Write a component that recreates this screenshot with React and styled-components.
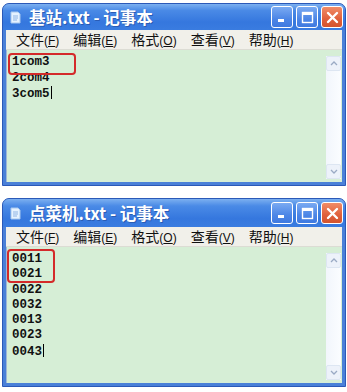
import styled, { createGlobalStyle } from 'styled-components';

const GlobalStyle = createGlobalStyle`
  html, body {
    margin: 0;
    padding: 0;
    background: #ffffff;
  }
  body {
    font-family: "Noto Sans CJK SC", "Noto Sans", sans-serif;
  }
`;

const Page = styled.div`
  width: 347px;
  height: 392px;
  padding: 3px 1px 0 2px;
  box-sizing: border-box;
  display: flex;
  flex-direction: column;
  gap: 12px;
`;

const Frame = styled.div`
  width: 344px;
  height: ${(p) => p.$height}px;
  box-sizing: border-box;
  display: flex;
  flex-direction: column;
  border: 1px solid #2b59b8;
  border-radius: 7px 7px 0 0;
  background: #4a80d8;
  overflow: hidden;
`;

const TitleBar = styled.div`
  height: ${(p) => p.$h}px;
  flex-shrink: 0;
  display: flex;
  align-items: center;
  padding: 0 2px 0 7px;
  background: linear-gradient(180deg, #7cb0f0 0%, #4a8ae6 25%, #3577de 70%, #3a7ce0 100%);
`;

const TitleText = styled.span`
  flex: 1;
  margin-left: 8px;
  color: #ffffff;
  font-size: 16.5px;
  font-weight: 700;
  line-height: 1;
  text-shadow: 1px 1px 0 #2a5cb4;
`;

const Controls = styled.div`
  display: flex;
  gap: 3px;
`;

const CtrlButton = styled.div`
  width: 22px;
  height: 22px;
  box-sizing: border-box;
  border: 1px solid #ffffff;
  border-radius: 3px;
  display: flex;
  align-items: center;
  justify-content: center;
  background: ${(p) =>
    p.$close
      ? 'linear-gradient(180deg, #f08c68 0%, #e0603c 60%, #d4542e 100%)'
      : 'linear-gradient(180deg, #7aaaf2 0%, #4c86e6 60%, #3f7ae0 100%)'};
`;

const Body = styled.div`
  flex: 1;
  display: flex;
  flex-direction: column;
  padding: 0 3px 3px;
  min-height: 0;
`;

const MenuBar = styled.div`
  height: 19px;
  flex-shrink: 0;
  display: flex;
  align-items: center;
  gap: 14px;
  padding-left: 10px;
  background: #f1f0ea;
  border-bottom: 1px solid #dcdcd4;
`;

const MenuItem = styled.span`
  font-size: 14px;
  line-height: 1;
  color: #111111;
  white-space: nowrap;

  & > small {
    font-family: "Liberation Sans", Arial, sans-serif;
    font-size: 12px;
  }
  & u {
    text-decoration-thickness: 1px;
    text-underline-offset: 1px;
  }
`;

const Client = styled.div`
  flex: 1;
  display: flex;
  position: relative;
  background: #d6eed6;
  border-left: 1px solid #9fb6d6;
  min-height: 0;
`;

const TextArea = styled.div`
  flex: 1;
  padding: ${(p) => p.$top}px 0 0 5px;
  font-family: "Liberation Mono", "DejaVu Sans Mono", monospace;
  font-size: 12.5px;
  font-weight: 700;
  line-height: ${(p) => p.$line}px;
  color: #111111;
`;

const Caret = styled.span`
  display: inline-block;
  width: 1px;
  height: 13px;
  margin-left: 1px;
  vertical-align: -2px;
  background: #000000;
`;

const Scrollbar = styled.div`
  width: 15px;
  margin: 6px 1px 3px 0;
  display: flex;
  flex-direction: column;
  justify-content: space-between;
  background: linear-gradient(90deg, #f2f6fc, #fbfdff);
`;

const ScrollBtn = styled.div`
  height: 15px;
  box-sizing: border-box;
  border: 1px solid #dde6f2;
  border-radius: 2px;
  background: #edf2fa;
  display: flex;
  align-items: center;
  justify-content: center;
`;

const Highlight = styled.div`
  position: absolute;
  left: ${(p) => p.$x}px;
  top: ${(p) => p.$y}px;
  width: ${(p) => p.$w}px;
  height: ${(p) => p.$h}px;
  box-sizing: border-box;
  border: 2px solid #d42a2a;
  border-radius: 4px;
  pointer-events: none;
`;

const NoteIcon = () => (
  <svg width="11" height="13" viewBox="0 0 11 13">
    <path d="M1 1 H8 L10 3 V12 H1 Z" fill="#e6f2ff" stroke="#a8c8ee" strokeWidth="1" />
    <path d="M3 5 H8 M3 7 H8 M3 9 H7" stroke="#8fb4e4" strokeWidth="1" />
  </svg>
);

const Chevron = ({ up }) => (
  <svg width="8" height="5" viewBox="0 0 8 5">
    <path
      d={up ? 'M1 4 L4 1 L7 4' : 'M1 1 L4 4 L7 1'}
      fill="none"
      stroke="#9aaac4"
      strokeWidth="1.3"
    />
  </svg>
);

const menus = [
  ['文件', 'F'],
  ['编辑', 'E'],
  ['格式', 'O'],
  ['查看', 'V'],
  ['帮助', 'H'],
];

const Notepad = ({ title, lines, height, titleH, top, line, box }) => (
  <Frame $height={height}>
    <TitleBar $h={titleH}>
      <NoteIcon />
      <TitleText>{title}</TitleText>
      <Controls>
        <CtrlButton>
          <svg width="11" height="11" viewBox="0 0 11 11">
            <rect x="1" y="7" width="6" height="3" fill="#ffffff" />
          </svg>
        </CtrlButton>
        <CtrlButton>
          <svg width="13" height="13" viewBox="0 0 13 13">
            <rect x="1.5" y="1.5" width="10" height="10" fill="none" stroke="#ffffff" strokeWidth="1.4" />
            <rect x="1" y="1" width="11" height="3" fill="#ffffff" />
          </svg>
        </CtrlButton>
        <CtrlButton $close>
          <svg width="13" height="13" viewBox="0 0 13 13">
            <path d="M2 2 L11 11 M11 2 L2 11" stroke="#ffffff" strokeWidth="2.4" strokeLinecap="round" />
          </svg>
        </CtrlButton>
      </Controls>
    </TitleBar>
    <Body>
      <MenuBar>
        {menus.map(([name, key]) => (
          <MenuItem key={key}>
            {name}
            <small>
              (<u>{key}</u>)
            </small>
          </MenuItem>
        ))}
      </MenuBar>
      <Client>
        <TextArea $top={top} $line={line}>
          {lines.map((l, i) => (
            <div key={l}>
              {l}
              {i === lines.length - 1 && <Caret />}
            </div>
          ))}
        </TextArea>
        <Scrollbar>
          <ScrollBtn>
            <Chevron up />
          </ScrollBtn>
          <ScrollBtn>
            <Chevron />
          </ScrollBtn>
        </Scrollbar>
        <Highlight $x={box.x} $y={box.y} $w={box.w} $h={box.h} />
      </Client>
    </Body>
  </Frame>
);

export default function App() {
  return (
    <>
      <GlobalStyle />
      <Page>
        <Notepad
          title="基站.txt - 记事本"
          lines={['1com3', '2com4', '3com5']}
          height={183}
          titleH={26}
          top={5}
          line={15.5}
          box={{ x: 1, y: 3, w: 68, h: 22 }}
        />
        <Notepad
          title="点菜机.txt - 记事本"
          lines={['0011', '0021', '0022', '0032', '0013', '0023', '0043']}
          height={189}
          titleH={28}
          top={5}
          line={15.3}
          box={{ x: 0, y: 2, w: 48, h: 34 }}
        />
      </Page>
    </>
  );
}
